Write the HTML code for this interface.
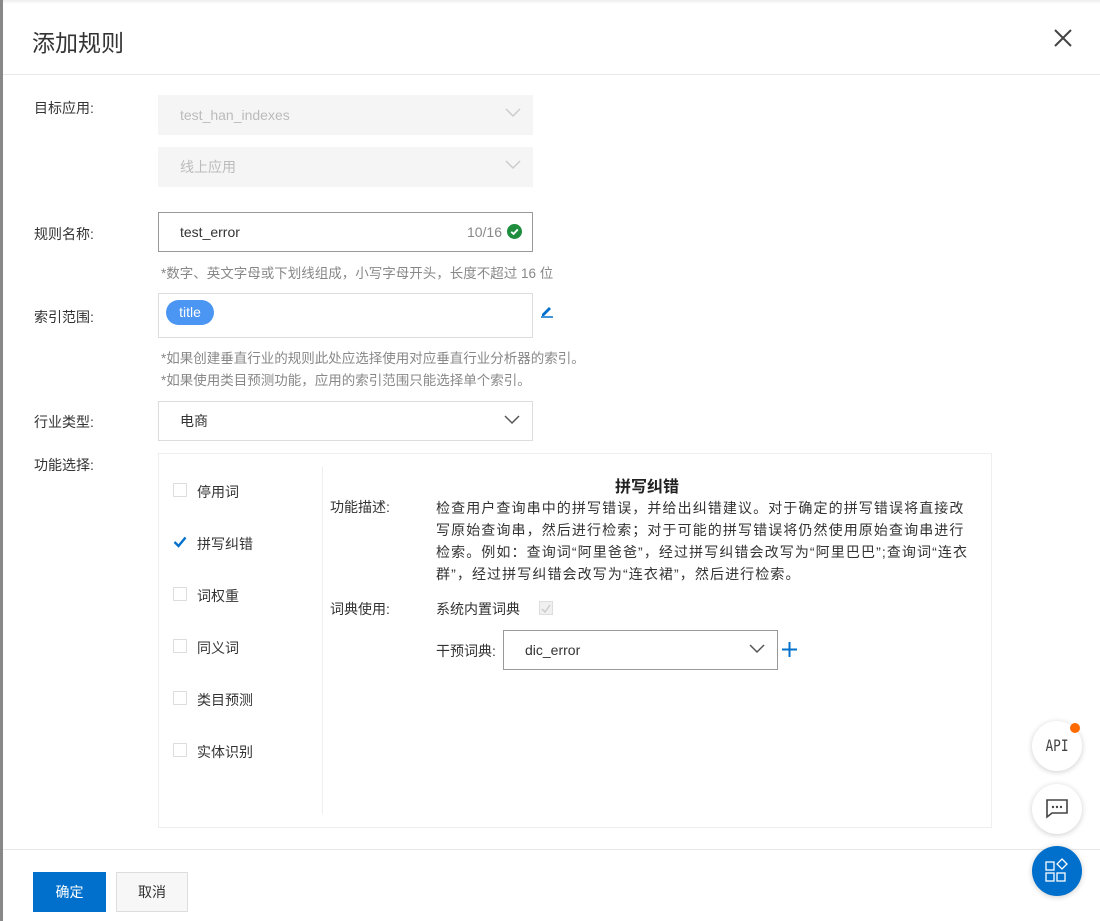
<!DOCTYPE html>
<html><head><meta charset="utf-8"><style>
*{box-sizing:border-box;margin:0;padding:0}
body{width:1100px;height:921px;background:#fff;font-family:"Liberation Sans","Noto Sans CJK SC",sans-serif;font-size:14px;color:#333;position:relative;overflow:hidden}
.abs{position:absolute}
.lbl{position:absolute;left:34px;font-size:14px;color:#333}
.sel{position:absolute;left:158px;width:375px;height:40px;background:#f5f5f5;color:#bbb;padding-left:22px;line-height:40px;font-size:14px}
.chev{position:absolute;right:12px;top:13px;width:16px;height:10px}
.hint{position:absolute;left:161px;color:#888;font-size:13.5px}
.cb{position:absolute;left:173px;width:14px;height:14px;border:1px solid #ddd;background:#fff}
.cbl{position:absolute;left:197px;font-size:14px;color:#333}
.fab{position:absolute;left:1032px;width:50px;height:50px;border-radius:50%;background:#fff;box-shadow:0 1px 6px rgba(0,0,0,.2)}
</style></head><body>
<div class="abs" style="left:0;top:0;width:3px;height:921px;background:#888"></div>
<div class="abs" style="left:3px;top:0;width:1097px;height:4px;background:linear-gradient(#eee,#fff)"></div>
<div class="abs" style="left:32px;top:24px;font-size:23px;color:#333">添加规则</div>
<svg class="abs" style="left:1053px;top:28px" width="20" height="20" viewBox="0 0 20 20"><path d="M2 2L18 18M18 2L2 18" stroke="#444" stroke-width="2"/></svg>
<div class="abs" style="left:3px;top:74px;width:1097px;height:1px;background:#e8e8e8"></div>

<div class="lbl" style="top:98px">目标应用:</div>
<div class="sel" style="top:95px">test_han_indexes<svg class="chev" viewBox="0 0 16 10"><path d="M1 1L8 8L15 1" fill="none" stroke="#ccc" stroke-width="1.5"/></svg></div>
<div class="sel" style="top:147px">线上应用<svg class="chev" viewBox="0 0 16 10"><path d="M1 1L8 8L15 1" fill="none" stroke="#ccc" stroke-width="1.5"/></svg></div>

<div class="lbl" style="top:224px">规则名称:</div>
<div class="abs" style="left:158px;top:212px;width:375px;height:40px;border:1px solid #999;line-height:38px;padding-left:21px;color:#333">test_error
<span class="abs" style="right:30px;top:0;color:#888">10/16</span>
<svg class="abs" style="right:10px;top:11px" width="15" height="15" viewBox="0 0 16 16"><circle cx="8" cy="8" r="8" fill="#1e8e3e"/><path d="M4.5 8.3L7 10.6L11.5 5.8" fill="none" stroke="#fff" stroke-width="2"/></svg></div>
<div class="hint" style="top:262px">*数字、英文字母或下划线组成，小写字母开头，长度不超过 16 位</div>

<div class="lbl" style="top:307px">索引范围:</div>
<div class="abs" style="left:158px;top:293px;width:375px;height:45px;border:1px solid #ddd"></div>
<div class="abs" style="left:166px;top:300px;width:48px;height:25px;border-radius:13px;background:#4b96f3;color:#fff;font-size:14px;line-height:25px;text-align:center">title</div>
<svg class="abs" style="left:540px;top:304px" width="14" height="14" viewBox="0 0 14 14"><path d="M2 10L9 3L11 5L4 12L2 12Z" fill="#0070cc"/><path d="M1 13H13" stroke="#0070cc" stroke-width="1.5"/></svg>
<div class="hint" style="top:347px">*如果创建垂直行业的规则此处应选择使用对应垂直行业分析器的索引。</div>
<div class="hint" style="top:369px">*如果使用类目预测功能，应用的索引范围只能选择单个索引。</div>

<div class="lbl" style="top:412px">行业类型:</div>
<div class="abs" style="left:158px;top:401px;width:375px;height:40px;border:1px solid #ddd;line-height:38px;padding-left:21px">电商<svg class="chev" viewBox="0 0 16 10"><path d="M1 1L8 8L15 1" fill="none" stroke="#555" stroke-width="1.5"/></svg></div>

<div class="lbl" style="top:455px">功能选择:</div>
<div class="abs" style="left:158px;top:453px;width:834px;height:375px;border:1px solid #eee"></div>
<div class="abs" style="left:322px;top:467px;width:1px;height:347px;background:#eee"></div>
<div class="cb" style="top:483px"></div><div class="cbl" style="top:482px">停用词</div>
<div class="cb" style="top:535px;border:none"><svg width="14" height="14" viewBox="0 0 14 14"><path d="M1.5 7L5.5 11L12.5 2.5" fill="none" stroke="#0070cc" stroke-width="2.4"/></svg></div><div class="cbl" style="top:534px">拼写纠错</div>
<div class="cb" style="top:587px"></div><div class="cbl" style="top:586px">词权重</div>
<div class="cb" style="top:639px"></div><div class="cbl" style="top:638px">同义词</div>
<div class="cb" style="top:691px"></div><div class="cbl" style="top:690px">类目预测</div>
<div class="cb" style="top:743px"></div><div class="cbl" style="top:742px">实体识别</div>

<div class="abs" style="left:615px;top:473px;font-size:16px;font-weight:bold;color:#222">拼写纠错</div>
<div class="abs" style="left:330px;top:497px">功能描述:</div>
<div class="abs" style="left:436px;top:497px;width:540px;line-height:22px;color:#333;letter-spacing:1.1px">检查用户查询串中的拼写错误，并给出纠错建议。对于确定的拼写错误将直接改写原始查询串，然后进行检索；对于可能的拼写错误将仍然使用原始查询串进行检索。例如：查询词“阿里爸爸”，经过拼写纠错会改写为“阿里巴巴”;查询词“连衣群”，经过拼写纠错会改写为“连衣裙”，然后进行检索。</div>
<div class="abs" style="left:330px;top:599px">词典使用:</div>
<div class="abs" style="left:436px;top:599px">系统内置词典</div>
<div class="abs" style="left:539px;top:601px;width:14px;height:14px;background:#f0f0f0;border:1px solid #ddd"><svg width="12" height="12" viewBox="0 0 12 12"><path d="M2 6L5 9L10 2" fill="none" stroke="#ccc" stroke-width="1.5"/></svg></div>
<div class="abs" style="left:436px;top:641px">干预词典:</div>
<div class="abs" style="left:503px;top:630px;width:275px;height:40px;border:1px solid #999;line-height:38px;padding-left:21px">dic_error<svg class="chev" viewBox="0 0 16 10"><path d="M1 1L8 8L15 1" fill="none" stroke="#555" stroke-width="1.5"/></svg></div>
<svg class="abs" style="left:782px;top:642px" width="15" height="15" viewBox="0 0 15 15"><path d="M7.5 0V15M0 7.5H15" stroke="#0070cc" stroke-width="2"/></svg>

<div class="abs" style="left:3px;top:849px;width:1097px;height:1px;background:#e8e8e8"></div>
<div class="abs" style="left:33px;top:872px;width:73px;height:40px;background:#0070cc;color:#fff;line-height:40px;text-align:center">确定</div>
<div class="abs" style="left:116px;top:872px;width:72px;height:40px;background:#f7f7f7;border:1px solid #ddd;line-height:38px;text-align:center">取消</div>

<div class="fab" style="top:721px"><div style="text-align:center;line-height:50px;font-family:'DejaVu Sans Mono',monospace;font-size:16px;color:#444;transform:scaleX(.8)">API</div></div>
<div class="abs" style="left:1070px;top:723px;width:10px;height:10px;border-radius:50%;background:#ff6a00"></div>
<div class="fab" style="top:784px"><svg style="position:absolute;left:14px;top:14px" width="22" height="22" viewBox="0 0 22 22"><path d="M1 2H21V15H6L1 19Z" fill="none" stroke="#444" stroke-width="1.6"/><circle cx="7" cy="9" r="1.2" fill="#444"/><circle cx="11" cy="9" r="1.2" fill="#444"/><circle cx="15" cy="9" r="1.2" fill="#444"/></svg></div>
<div class="fab" style="top:846px;background:#0070cc"><svg style="position:absolute;left:13px;top:12px" width="24" height="26" viewBox="0 0 24 26"><g fill="none" stroke="#fff" stroke-width="1.3"><rect x="1" y="4" width="8" height="8"/><path d="M17 1L22 6L17 11L12 6Z"/><rect x="1" y="15" width="8" height="8"/><rect x="12" y="15" width="8" height="8"/></g></svg></div>
</body></html>
